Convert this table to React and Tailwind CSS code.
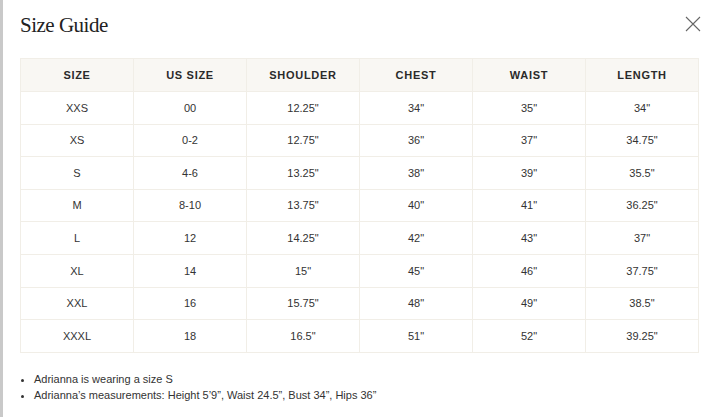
import React from 'react'

const headers = ['SIZE', 'US SIZE', 'SHOULDER', 'CHEST', 'WAIST', 'LENGTH']

const rows = [
  ['XXS', '00', '12.25"', '34"', '35"', '34"'],
  ['XS', '0-2', '12.75"', '36"', '37"', '34.75"'],
  ['S', '4-6', '13.25"', '38"', '39"', '35.5"'],
  ['M', '8-10', '13.75"', '40"', '41"', '36.25"'],
  ['L', '12', '14.25"', '42"', '43"', '37"'],
  ['XL', '14', '15"', '45"', '46"', '37.75"'],
  ['XXL', '16', '15.75"', '48"', '49"', '38.5"'],
  ['XXXL', '18', '16.5"', '51"', '52"', '39.25"'],
]

const App = () => {
  return (
    <div className="flex h-[417px] w-[714px] overflow-hidden bg-white font-['Liberation_Sans',Arial,sans-serif]">
      <div className="w-[3px] shrink-0 bg-[#c9c9c9]" />
      <div className="flex flex-1 flex-col pl-[17px] pr-[12px]">
        <div className="flex items-start justify-between pt-[12px]">
          <h2 className="font-['Liberation_Serif','DejaVu_Serif',serif] text-[21px] leading-[26px] tracking-[-0.5px] text-[#222]">
            Size Guide
          </h2>
          <button className="mr-[1px] mt-[4px] text-[#666]">
            <svg width="16" height="16" viewBox="0 0 16 16" fill="none" stroke="currentColor" strokeWidth="1.1">
              <path d="M1 1L15 15M15 1L1 15" />
            </svg>
          </button>
        </div>

        <table className="mt-[20px] w-[679px] table-fixed border-collapse border border-[#f1eee7] text-[11px] text-[#333]">
          <thead>
            <tr className="h-[33px] bg-[#f9f7f3]">
              {headers.map((h) => (
                <th key={h} className="border-x border-[#f1eee7] text-center text-[11px] font-bold tracking-[0.7px] text-[#2a2a2a]">
                  {h}
                </th>
              ))}
            </tr>
          </thead>
          <tbody>
            {rows.map((r) => (
              <tr key={r[0]} className="h-[32.6px]">
                {r.map((c, i) => (
                  <td key={i} className="border border-[#f1eee7] text-center">
                    {c}
                  </td>
                ))}
              </tr>
            ))}
          </tbody>
        </table>

        <ul className="mt-[18px] list-disc pl-[14px] text-[11px] leading-[16px] text-[#333]">
          <li>Adrianna is wearing a size S</li>
          <li>Adrianna’s measurements: Height 5’9”, Waist 24.5”, Bust 34”, Hips 36”</li>
        </ul>
      </div>
    </div>
  )
}

export default App
